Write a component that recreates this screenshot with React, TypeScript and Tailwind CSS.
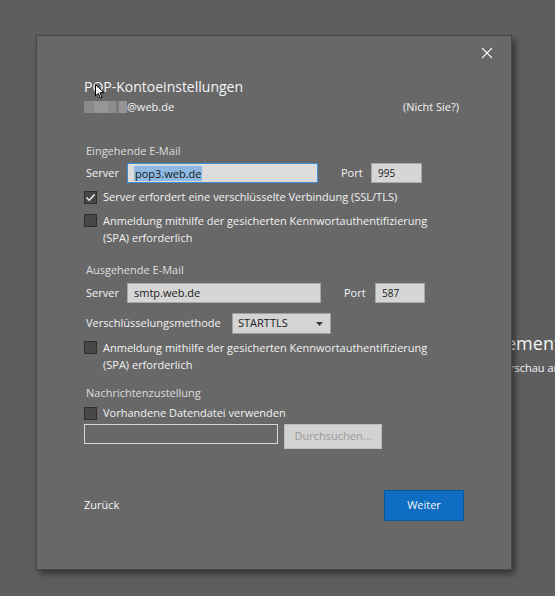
import React from 'react';

const font = { fontFamily: '"Open Sans", "Noto Sans", sans-serif' };

const Checkbox: React.FC<{ checked?: boolean }> = ({ checked }) => (
  <span className="w-[13px] h-[13px] shrink-0 bg-[#474747] border border-[#2e2e2e] flex items-center justify-center">
    {checked && (
      <svg width="11" height="11" viewBox="0 0 11 11" fill="none" stroke="#f4f4f4" strokeWidth="1.5">
        <path d="M1.5 5.5 L4.2 8.2 L9.5 2.5" />
      </svg>
    )}
  </span>
);

const App: React.FC = () => {
  return (
    <div className="relative w-[555px] h-[596px] overflow-hidden bg-[#5e5e5e] text-[#f2f2f2]" style={font}>
      {/* window behind the dialog */}
      <div className="absolute left-[506px] top-[331px] w-[49px] overflow-hidden whitespace-nowrap text-[18px] leading-[24px] text-[#f4f4f4]">ement</div>
      <div className="absolute left-[510px] top-[360px] w-[45px] overflow-hidden whitespace-nowrap text-[11px] leading-[16px] text-[#f4f4f4]">rschau an</div>

      <div className="relative ml-[36px] mt-[35px] w-[476px] h-[535px] bg-[#686868] border border-[#474747] shadow-[3px_4px_6px_rgba(0,0,0,0.45)] pl-[47px] pt-[41px] flex flex-col">
        <button className="absolute right-[17px] top-[10px] w-[14px] h-[14px] flex items-center justify-center">
          <svg width="12" height="12" viewBox="0 0 12 12" stroke="#f0f0f0" strokeWidth="1.2">
            <path d="M1 1 L11 11 M11 1 L1 11" />
          </svg>
        </button>

        <div className="text-[14px] leading-[20px] text-[#f4f4f4]">POP-Kontoeinstellungen</div>
        <div className="mt-[2px] flex items-center justify-between pr-[52px] text-[11px] leading-[16px]">
          <div className="flex items-center">
            <span className="flex h-[12px]">
              <span className="w-[10px] bg-[#8a8a8a]" />
              <span className="w-[14px] bg-[#969696]" />
              <span className="w-[8px] bg-[#8c8c8c]" />
              <span className="w-[3px] bg-[#7a7a7a]" />
              <span className="w-[8px] bg-[#959595]" />
            </span>
            <span>@web.de</span>
          </div>
          <span>(Nicht Sie?)</span>
        </div>

        <div className="mt-[28px] text-[11px] leading-[16px] text-[#dedede] pl-[2px]">Eingehende E-Mail</div>
        <div className="mt-[4px] flex items-center text-[11px]">
          <span className="w-[43px] pl-[2px]">Server</span>
          <div className="w-[191px] h-[20px] bg-[#dcdcdc] border border-[#3c8fd8] flex items-center pl-[6px]">
            <span className="bg-[#8db9e2] text-[#1a1a1a] leading-[15px] px-[1px]">pop3.web.de</span>
          </div>
          <span className="ml-[23px] w-[30px]">Port</span>
          <div className="w-[51px] h-[20px] bg-[#d6d6d6] border border-[#a8a8a8] flex items-center pl-[6px] text-[#1a1a1a] text-[10px]">995</div>
        </div>
        <div className="mt-[6px] flex items-center gap-[6px] text-[11px] leading-[16px]">
          <Checkbox checked />
          <span>Server erfordert eine verschlüsselte Verbindung (SSL/TLS)</span>
        </div>
        <div className="mt-[7px] flex items-start gap-[6px] text-[11px] leading-[17px]">
          <span className="mt-[2px]"><Checkbox /></span>
          <span className="w-[340px]">Anmeldung mithilfe der gesicherten Kennwortauthentifizierung (SPA) erforderlich</span>
        </div>

        <div className="mt-[16px] text-[11px] leading-[16px] text-[#dedede] pl-[2px]">Ausgehende E-Mail</div>
        <div className="mt-[5px] flex items-center text-[11px]">
          <span className="w-[43px] pl-[2px]">Server</span>
          <div className="w-[194px] h-[20px] bg-[#d6d6d6] border border-[#a8a8a8] flex items-center pl-[6px] text-[#1a1a1a]">smtp.web.de</div>
          <span className="ml-[23px] w-[31px]">Port</span>
          <div className="w-[50px] h-[20px] bg-[#d6d6d6] border border-[#a8a8a8] flex items-center pl-[6px] text-[#1a1a1a] text-[10px]">587</div>
        </div>
        <div className="mt-[10px] flex items-center text-[11px]">
          <span className="w-[148px] pl-[2px]">Verschlüsselungsmethode</span>
          <div className="w-[99px] h-[21px] bg-[#d4d4d4] border border-[#9e9e9e] flex items-center justify-between pl-[5px] pr-[7px] text-[#1a1a1a]">
            <span>STARTTLS</span>
            <svg width="7" height="4" viewBox="0 0 7 4"><path d="M0 0 H7 L3.5 4 Z" fill="#3a3a3a" /></svg>
          </div>
        </div>
        <div className="mt-[5px] flex items-start gap-[6px] text-[11px] leading-[17px]">
          <span className="mt-[2px]"><Checkbox /></span>
          <span className="w-[340px]">Anmeldung mithilfe der gesicherten Kennwortauthentifizierung (SPA) erforderlich</span>
        </div>

        <div className="mt-[12px] text-[11px] leading-[16px] text-[#dedede] pl-[2px]">Nachrichtenzustellung</div>
        <div className="mt-[4px] flex items-center gap-[6px] text-[11px] leading-[16px]">
          <Checkbox />
          <span>Vorhandene Datendatei verwenden</span>
        </div>
        <div className="mt-[3px] flex items-start gap-[6px]">
          <div className="w-[194px] h-[20px] border border-[#d6d6d6]" />
          <button className="w-[98px] h-[25px] bg-[#d2d2d2] border border-[#bdbdbd] text-[11px] text-[#9a9a9a]">Durchsuchen...</button>
        </div>

        <div className="mt-[41px] flex items-center justify-between pr-[47px]">
          <span className="text-[11px] text-[#f6f6f6]">Zurück</span>
          <button className="w-[80px] h-[31px] bg-[#0f6ec4] border border-[#0a5499] text-[11px] text-[#f4f4f4]">Weiter</button>
        </div>

        {/* mouse pointer */}
        <svg className="absolute left-[58px] top-[48px]" width="10" height="15" viewBox="0 0 10 15">
          <path d="M0.5 0.5 L0.5 12 L3.3 9.3 L5.3 14 L7 13.3 L5 8.7 L9 8.7 Z" fill="#ffffff" stroke="#000000" strokeWidth="1" />
        </svg>
      </div>
    </div>
  );
};

export default App;
